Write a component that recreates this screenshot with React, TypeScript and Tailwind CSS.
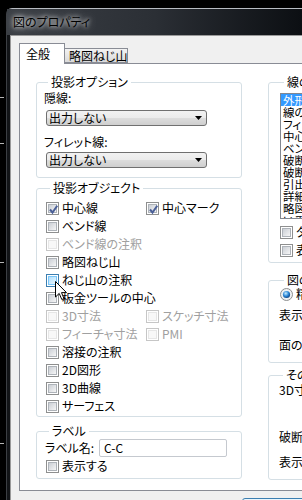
import React from 'react';
import clsx from 'clsx';

const ui = "font-['Noto_Sans_CJK_JP','Noto_Sans',sans-serif] [font-feature-settings:'palt'] text-[12px] leading-[14px]";

function Box({ checked = false, disabled = false, hover = false }: { checked?: boolean; disabled?: boolean; hover?: boolean }) {
  return (
    <span
      className={clsx(
        'relative flex w-[13px] h-[13px] shrink-0 border p-[1px] bg-white',
        disabled ? 'border-[#c6c6c6]' : hover ? 'border-[#3c7fb1]' : 'border-[#8e8f8f]'
      )}
    >
      <span
        className={clsx(
          'flex-1 border',
          disabled
            ? 'border-[#e6e6e6] bg-[#f8f8f8]'
            : hover
            ? 'border-[#79c6f9] bg-gradient-to-br from-[#b1dffd] to-[#e9f7fe]'
            : 'border-[#aeb3b9] bg-gradient-to-br from-[#cbcfd5] to-[#f6f6f6]'
        )}
      />
      {checked && (
        <svg className="absolute left-[1px] top-[1px]" width="11" height="11" viewBox="0 0 11 11">
          <path d="M2 5.5 L4.5 8.5 L9.2 1.8" fill="none" stroke="#4a5f97" strokeWidth="2" />
        </svg>
      )}
    </span>
  );
}

function Check({ label, checked, disabled, hover }: { label: string; checked?: boolean; disabled?: boolean; hover?: boolean }) {
  return (
    <div className="flex items-center gap-[3px] h-[18px] whitespace-nowrap">
      <Box checked={checked} disabled={disabled} hover={hover} />
      <span className={disabled ? 'text-[#a0a0a0]' : 'text-black'}>{label}</span>
    </div>
  );
}

function Combo({ value, className }: { value: string; className?: string }) {
  return (
    <div
      className={clsx(
        'ml-[2px] w-[161px] h-[16px] border border-[#707070] rounded-[3px] flex items-center justify-between pl-[2px] pr-[4px] bg-[linear-gradient(#f2f2f2,#ebebeb_50%,#dddddd_50%,#cfcfcf)]',
        className
      )}
    >
      <span>{value}</span>
      <svg width="7" height="4" viewBox="0 0 7 4">
        <path d="M0 0h7L3.5 4z" fill="#000" />
      </svg>
    </div>
  );
}

function Group({ title, className, children }: { title: string; className?: string; children: React.ReactNode }) {
  return (
    <fieldset className={clsx('border border-[#d5dfe5] rounded-[3px] min-w-0', className)}>
      <legend className="ml-[4px] px-[3px] leading-[14px] whitespace-nowrap">{title}</legend>
      {children}
    </fieldset>
  );
}

const listItems = ['外形線', '線の種類', 'フィレット線', '中心線', 'ベンド線', '破断線', '破断線の注釈', '引出線', '詳細図', '略図ねじ山', 'いろいろ'];

export default function App() {
  return (
    <div className={clsx('relative w-[302px] h-[500px] overflow-hidden bg-black flex', ui)}>
      {/* desktop strip */}
      <div className="w-[6px] shrink-0 flex flex-col pt-[97px]">
        <div className="w-[4px] h-px bg-[#b5b5b5]" />
        <div className="w-[4px] h-px bg-[#b5b5b5] mt-[45px]" />
        <div className="w-[4px] h-px bg-[#b5b5b5] mt-[118px]" />
        <div className="w-[4px] h-px bg-[#b5b5b5] mt-[180px]" />
      </div>

      {/* window */}
      <div className="flex-1 mt-[8px] flex flex-col border-t border-t-[#b8bcc2] border-l border-l-[#3c3f44] rounded-tl-[6px] bg-[#121417] min-w-0">
        <div className="h-[26px] shrink-0 flex items-center pl-[6px] bg-gradient-to-r from-[#3b3f45] via-[#2b2f35] to-[#0c0f13]">
          <span className="text-black [text-shadow:0_0_4px_#fff,0_0_8px_rgba(255,255,255,0.8)] whitespace-nowrap">図のプロパティ</span>
        </div>

        <div className="flex-1 ml-[3px] border-l border-t border-[#9a9a9a] bg-[#f0f0f0] flex flex-col pl-[8px] pt-[7px]">
          {/* tabs */}
          <div className="flex items-end h-[20px] shrink-0">
            <div className="relative z-10 -mb-px h-[21px] w-[46px] border border-b-0 border-[#898c95] bg-white pl-[6px] pt-[3px] whitespace-nowrap">
              全般
            </div>
            <div className="h-[15px] w-[63px] border border-l-0 border-[#898c95] bg-gradient-to-b from-[#f3f3f3] to-[#dadada] pl-[4px] whitespace-nowrap">
              略図ねじ山
            </div>
          </div>

          {/* panel */}
          <div className="w-[400px] h-[428px] shrink-0 border border-[#898c95] bg-white flex gap-[26px] pl-[16px] pt-[11px]">
            {/* left column */}
            <div className="w-[206px] shrink-0 flex flex-col">
              <Group title="投影オプション" className="pl-[7px] pb-[9px]">
                <div className="mt-[2px]">隠線:</div>
                <Combo value="出力しない" className="mt-[5px]" />
                <div className="mt-[9px]">フィレット線:</div>
                <Combo value="出力しない" className="mt-[3px]" />
              </Group>

              <Group title="投影オブジェクト" className="mt-[3px] pl-[9px] pb-[1px]">
                <div className="mt-[4px] grid grid-cols-[100px_1fr]">
                  <Check label="中心線" checked />
                  <Check label="中心マーク" checked />
                  <Check label="ベンド線" />
                  <div />
                  <Check label="ベンド線の注釈" disabled />
                  <div />
                  <Check label="略図ねじ山" />
                  <div />
                  <Check label="ねじ山の注釈" hover />
                  <div />
                  <Check label="板金ツールの中心" />
                  <div />
                  <Check label="3D寸法" disabled />
                  <Check label="スケッチ寸法" disabled />
                  <Check label="フィーチャ寸法" disabled />
                  <Check label="PMI" disabled />
                  <Check label="溶接の注釈" />
                  <div />
                  <Check label="2D図形" />
                  <div />
                  <Check label="3D曲線" />
                  <div />
                  <Check label="サーフェス" />
                  <div />
                </div>
              </Group>

              <Group title="ラベル" className="mt-[7px] pl-[8px] pb-[3px]">
                <div className="mt-[1px] flex items-center h-[18px]">
                  <span className="w-[54px] whitespace-nowrap">ラベル名:</span>
                  <div className="w-[128px] h-[18px] border border-[#c5c9cf] rounded-[2px] flex items-center pl-[4px]">C-C</div>
                </div>
                <div className="pl-[1px]">
                  <Check label="表示する" />
                </div>
              </Group>
            </div>

            {/* right column */}
            <div className="w-[200px] shrink-0 flex flex-col whitespace-nowrap">
              <Group title="線の種類と表示" className="pl-[11px] pb-[3px]">
                <div className="mt-[4px] h-[126px] border border-[#828790] bg-white overflow-hidden flex flex-col">
                  {listItems.map((t, i) => (
                    <div
                      key={t}
                      className={clsx(
                        'h-[12px] shrink-0 overflow-hidden text-[11.5px] leading-[12px] pl-[2px]',
                        i === 0 ? 'bg-[#3399ff] text-white' : 'text-black'
                      )}
                    >
                      {t}
                    </div>
                  ))}
                </div>
                <div className="mt-[4px]">
                  <Check label="タンジェントエッジ" />
                  <Check label="表示しない" />
                </div>
              </Group>

              <Group title="図の表示" className="mt-[10px] pl-[11px] pb-[10px]">
                <div className="flex items-center gap-[3px] h-[14px]">
                  <svg width="13" height="13" viewBox="0 0 13 13">
                    <defs>
                      <radialGradient id="rg" cx="0.4" cy="0.35" r="0.7">
                        <stop offset="0" stopColor="#c8ecff" />
                        <stop offset="0.55" stopColor="#2a86d6" />
                        <stop offset="1" stopColor="#0b3a78" />
                      </radialGradient>
                    </defs>
                    <circle cx="6.5" cy="6.5" r="6" fill="#eef0f2" stroke="#8e8f8f" />
                    <circle cx="6.5" cy="6.5" r="3.6" fill="url(#rg)" />
                  </svg>
                  <span>精密表示</span>
                </div>
                <div className="mt-[7px] -ml-[1px]">表示スタイル:</div>
                <div className="mt-[16px] -ml-[1px]">面の色:</div>
              </Group>

              <Group title="その他" className="mt-[5px] pl-[10px] pb-[10px]">
                <div className="mt-[1px]">3D寸法の表示</div>
                <div className="mt-[33px]">破断線の幅:</div>
                <div className="mt-[11px]">表示の縮尺:</div>
              </Group>
            </div>
          </div>

          {/* buttons row */}
          <div className="pl-[223px] mt-[7px]">
            <div className="w-[75px] h-[23px] border border-[#3c7fb1] rounded-[3px] bg-gradient-to-b from-[#eaf6fd] to-[#bee6fd]" />
          </div>
        </div>
      </div>

      {/* mouse cursor */}
      <svg className="absolute left-[55px] top-[281px]" width="13" height="20" viewBox="0 0 13 20">
        <path d="M0.5 0.5 L0.5 16 L4.2 12.4 L6.8 18.5 L9 17.6 L6.5 11.6 L11.5 11.6 Z" fill="#fff" stroke="#000" strokeWidth="1" />
      </svg>
    </div>
  );
}
